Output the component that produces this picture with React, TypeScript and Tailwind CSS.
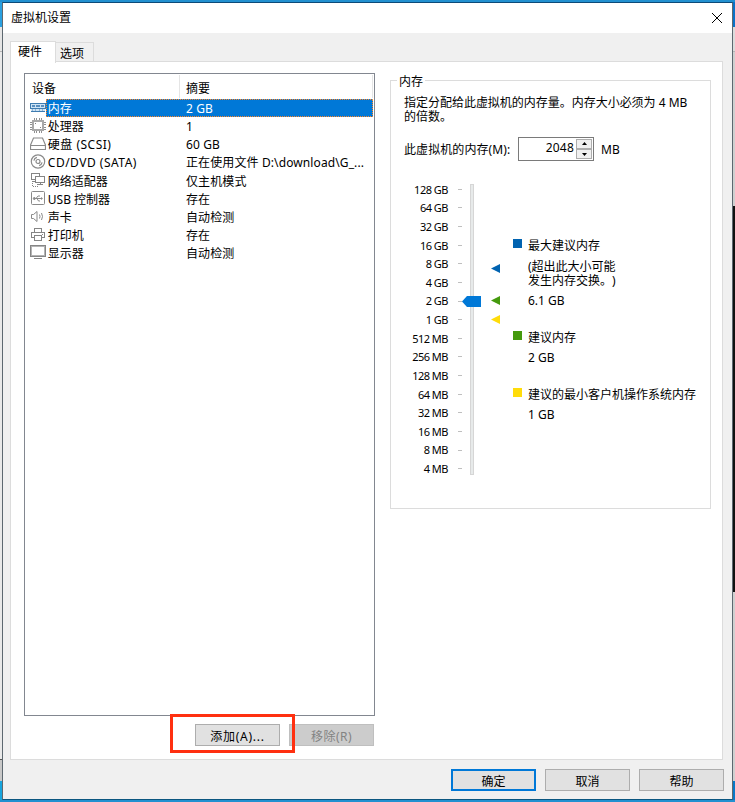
import React from 'react';
import clsx from 'clsx';

interface Device {
  name: string;
  summary: string;
  icon: React.ReactNode;
}

const MemoryIcon = () => (
  <svg width="16" height="18" viewBox="0 0 16 18" fill="none" shapeRendering="crispEdges">
    <path d="M0 4h16v6h-1v3H1v-3H0z" fill="#cfe4f5" />
    <path d="M0 4h16v1H0zM0 4h1v6H0zM15 4h1v6h-1zM0 9h16v1H0zM1 12h14v1H1z" fill="#3f7cb0" />
    <path d="M2 6h3v2H2zM6 6h4v2H6zM11 6h3v2h-3z" fill="#5a90c0" />
    <path d="M2 10h1v2H2zM5 10h1v2H5zM9 10h1v2H9zM12 10h1v2h-1z" fill="#8fb5d6" />
  </svg>
);

const CpuIcon = () => (
  <svg width="16" height="18" viewBox="0 0 16 18" fill="none" shapeRendering="crispEdges">
    <path d="M4 1h1v2H4zM6 1h1v2H6zM9 1h1v2H9zM11 1h1v2h-1zM4 14h1v2H4zM6 14h1v2H6zM9 14h1v2H9zM11 14h1v2h-1zM0 5h2v1H0zM0 7h2v1H0zM0 10h2v1H0zM0 12h2v1H0zM14 5h2v1h-2zM14 7h2v1h-2zM14 10h2v1h-2zM14 12h2v1h-2z" fill="#909090" />
    <rect x="3" y="4" width="10" height="9" stroke="#a8a8a8" strokeWidth="2" />
    <path d="M5 6h1v1H5zM10 10h1v1h-1z" fill="#808080" />
  </svg>
);

const DiskIcon = () => (
  <svg width="16" height="18" viewBox="0 0 16 18" fill="none" stroke="#8a8a8a" strokeWidth="1.2">
    <path d="M3.500 3h9l3 7v4.500H.5V10zM.5 10.500h15" />
  </svg>
);

const DiscIcon = () => (
  <svg width="16" height="18" viewBox="0 0 16 18" fill="none" stroke="#8a8a8a" strokeWidth="1.2">
    <circle cx="8" cy="8.500" r="6.700" />
    <circle cx="8" cy="8.500" r="2" />
    <path d="M3.900 7.700a4.200 4.200 0 0 1 3-3.300M12.100 9.300a4.200 4.200 0 0 1-3 3.300" />
  </svg>
);

const NetworkIcon = () => (
  <svg width="16" height="18" viewBox="0 0 16 18" fill="none" stroke="#858585" shapeRendering="crispEdges">
    <path d="M5 7.500H1.500v-6h8V4M2 9.500h3" />
    <path d="M5.500 4.500h9v6h-9zM7 12.500h6M10.500 10.500v2" />
    <path d="M2.500 11v3.500h6" strokeDasharray="1 1" />
  </svg>
);

const UsbIcon = () => (
  <svg width="16" height="18" viewBox="0 0 16 18" fill="none" stroke="#8a8a8a">
    <rect x="1.500" y="1.500" width="13" height="13" rx="1" />
    <path d="M4 8.500h8M6 8.500 8 6h2M7 8.500 8.500 11H10" />
    <circle cx="4.300" cy="8.500" r="1" fill="#8a8a8a" />
    <path d="M11 7l2 1.500-2 1.500z" fill="#8a8a8a" stroke="none" />
  </svg>
);

const SoundIcon = () => (
  <svg width="16" height="18" viewBox="0 0 16 18" fill="none" stroke="#8a8a8a">
    <path d="M1.500 6.500h2l3.500-3v10l-3.500-3h-2z" />
    <path d="M9.500 6.500q1 2 0 4M11.500 5q2 3.500 0 7" />
  </svg>
);

const PrinterIcon = () => (
  <svg width="16" height="18" viewBox="0 0 16 18" fill="none" stroke="#858585" shapeRendering="crispEdges">
    <path d="M4.500 6V2.500h7V6M4.500 11.500h-3v-5h13v5h-3M4.500 9.500h7v5h-7zM12 8.500h1" />
  </svg>
);

const DisplayIcon = () => (
  <svg width="16" height="18" viewBox="0 0 16 18" fill="none" shapeRendering="crispEdges">
    <rect x="1" y="2" width="14" height="10" stroke="#b4b4b4" strokeWidth="2" />
    <path d="M0 1.500h16M.5 1v12M15.500 1v12M0 12.500h16M4 14.500h8" stroke="#858585" />
  </svg>
);

const devices: Device[] = [
  { name: '内存', summary: '2 GB', icon: <MemoryIcon /> },
  { name: '处理器', summary: '1', icon: <CpuIcon /> },
  { name: '硬盘 (SCSI)', summary: '60 GB', icon: <DiskIcon /> },
  { name: 'CD/DVD (SATA)', summary: '正在使用文件 D:\\download\\G_...', icon: <DiscIcon /> },
  { name: '网络适配器', summary: '仅主机模式', icon: <NetworkIcon /> },
  { name: 'USB 控制器', summary: '存在', icon: <UsbIcon /> },
  { name: '声卡', summary: '自动检测', icon: <SoundIcon /> },
  { name: '打印机', summary: '存在', icon: <PrinterIcon /> },
  { name: '显示器', summary: '自动检测', icon: <DisplayIcon /> },
];

const scale = [
  '128 GB', '64 GB', '32 GB', '16 GB', '8 GB', '4 GB', '2 GB', '1 GB',
  '512 MB', '256 MB', '128 MB', '64 MB', '32 MB', '16 MB', '8 MB', '4 MB',
];

const Button = ({ children, className }: { children: React.ReactNode; className?: string }) => (
  <button className={clsx('flex h-[22px] w-[85px] items-center justify-center border pt-[3px]', className ?? 'border-[#adadad] bg-[#e1e1e1]')}>
    {children}
  </button>
);

const DeviceList = () => (
  <div className="flex h-[643px] w-[351px] flex-col border border-[#828790] bg-white">
    <div className="flex h-[25px] items-center pt-1">
      <span className="w-[154px] pl-[7px]">设备</span>
      <span className="-mt-1 h-[23px] w-px bg-[#e5e5e5]" />
      <span className="flex-1 pl-[6px]">摘要</span>
      <span className="-mt-1 mr-px h-[23px] w-px bg-[#e5e5e5]" />
    </div>
    {devices.map((device, i) => (
      <div key={device.name} className="flex h-[18.13px] pl-[5px] pr-px">
        {device.icon}
        <div
          className={clsx(
            'flex flex-1 items-center border border-dotted pt-[2px]',
            i === 0 ? 'border-[#ff8728] bg-[#0078d7] text-white' : 'border-transparent'
          )}
        >
          <span className={clsx('w-[138px] whitespace-nowrap pl-[0.8px]', device.name.includes('(') && 'tracking-[0.5px]')}>
            {device.name}
          </span>
          <span className="whitespace-nowrap pl-px tracking-[0.11px]">{device.summary}</span>
        </div>
      </div>
    ))}
  </div>
);

const Marker = ({ className }: { className: string }) => (
  <svg width="9" height="9" viewBox="0 0 9 9" className={clsx('absolute left-[100px]', className)}>
    <path d="M0 4.500 9 0v9z" fill="currentColor" />
  </svg>
);

const MemorySlider = () => (
  <div className="relative flex h-[300px] w-[122px] pl-[11px] text-[11px] tracking-[-0.5px]">
    <div className="flex w-[46px] flex-col pt-[1.700px]">
      {scale.map((label) => (
        <span key={label} className="h-[18.63px] whitespace-nowrap text-right leading-[18.63px]">
          {label}
        </span>
      ))}
    </div>
    <div className="ml-[10px] flex w-[4px] flex-col pt-[1px]">
      {scale.map((label) => (
        <span key={label} className="flex h-[18.63px] items-center">
          <span className="h-px w-full bg-[#bfbfbf]" />
        </span>
      ))}
    </div>
    <div className="ml-[8px] mt-[5px] h-[291px] w-[4px] border border-[#d6d6d6] bg-[#e7eaea]" />
    <svg width="19" height="11" viewBox="0 0 19 11" className="absolute left-[71px] top-[117px]">
      <path d="M0 5.500 5 0h14v11H5z" fill="#0078d7" />
    </svg>
    <Marker className="top-[85px] text-[#0063b1]" />
    <Marker className="top-[117px] text-[#459a0e]" />
    <Marker className="top-[136px] text-[#ffdc0a]" />
  </div>
);

const Legend = () => (
  <div className="flex flex-col pt-[59px] leading-[14px]">
    <div className="flex gap-[6px]">
      <span className="mt-px size-[9px] bg-[#0063b1]" />
      <div>
        <p className="pt-px">最大建议内存</p>
        <p className="mt-[7px]">(超出此大小可能<br />发生内存交换<span className="inline-block w-3">。</span>)</p>
        <p className="mt-[6px]">6.1 GB</p>
      </div>
    </div>
    <div className="mt-[22px] flex gap-[6px]">
      <span className="mt-px size-[9px] bg-[#459a0e]" />
      <div>
        <p className="pt-px">建议内存</p>
        <p className="mt-[6px]">2 GB</p>
      </div>
    </div>
    <div className="mt-[22px] flex gap-[6px]">
      <span className="mt-px size-[9px] bg-[#ffdc0a]" />
      <div>
        <p className="whitespace-nowrap pt-px">建议的最小客户机操作系统内存</p>
        <p className="mt-[6px]">1 GB</p>
      </div>
    </div>
  </div>
);

const MemoryPanel = () => (
  <section className="ml-[15px] mt-[7px] h-[429px] w-[321px] border border-[#dcdcdc]">
    <h2 className="-mt-2 ml-[6px] h-4 w-[28px] bg-white pl-[2px] leading-[18px]">内存</h2>
    <p className="ml-[13px] mt-[7px] whitespace-nowrap leading-[14px] tracking-[-0.02px]">
      指定分配给此虚拟机的内存量。内存大小必须为 4 MB<br />的倍数。
    </p>
    <div className="ml-[13px] mt-[13px] flex h-6 items-center">
      <span className="w-[114px] pt-[2px] tracking-[0.08px]">此虚拟机的内存(M):</span>
      <div className="flex h-6 w-[76px] border border-[#7a7a7a] pr-px">
        <span className="flex-1 pr-[2px] text-right leading-[19px] tracking-[0.2px]">2048</span>
        <div className="flex w-4 flex-col py-px">
          {['M2 4h5L4.500 1z', 'M2 2h5L4.500 5z'].map((d) => (
            <button key={d} className="flex flex-1 items-center justify-center border border-[#adadad] bg-[#f0f0f0]">
              <svg width="9" height="6" viewBox="0 0 9 6"><path d={d} fill="#000" /></svg>
            </button>
          ))}
        </div>
      </div>
      <span className="ml-[7px] pt-[2px]">MB</span>
    </div>
    <div className="mt-[18px] flex">
      <MemorySlider />
      <Legend />
    </div>
  </section>
);

const App = () => (
  <div className="flex h-[802px] w-[735px] flex-col bg-[#2290d0] font-['Noto_Sans','Noto_Sans_CJK_SC',sans-serif] text-[12px] text-black">
    <div className="h-[2px]" />
    <div className="flex h-[798px]">
      <div className="flex w-[2px] flex-col">
        <span className="h-[25px] bg-[#2aa0e0]" />
        <span className="h-[24px] bg-[#e5e5e5]" />
        <span className="h-px bg-[#b5b5b5]" />
        <span className="flex-1 bg-[#e9e9e9]" />
        <span className="h-px bg-[#555]" />
        <span className="h-[21px] bg-[#c8c8c8]" />
        <span className="h-[19px] bg-[#17a5de]" />
      </div>
      <div className="flex w-[731px] flex-col border border-x-[#5d6870] border-b-[#0b5680] border-t-[#0c4a78] bg-[#f0f0f0]">
        <header className="flex h-[30px] items-center justify-between bg-white pl-2 pr-[9px]">
          <h1 className="text-[12px]">虚拟机设置</h1>
          <svg width="12" height="12" viewBox="0 0 12 12" fill="none" stroke="#000">
            <path d="M1 1l10 10M11 1 1 11" />
          </svg>
        </header>
        <nav className="flex h-[29px] items-end pl-[7px] pt-[7px]">
          <div className="relative z-10 -mb-px h-[22px] w-[46px] border border-b-0 border-[#dcdcdc] bg-white pl-[7px] leading-[20px]">硬件</div>
          <div className="h-[20px] w-[38px] border border-b-0 border-l-0 border-[#dcdcdc] pl-[4px] leading-[21px]">选项</div>
        </nav>
        <main className="ml-[7px] -mt-px flex h-[699px] w-[713px] border border-[#dcdcdc] bg-white pl-[13px] pt-[11px]">
          <div>
            <DeviceList />
            <div className="mt-[8px] flex items-center pl-[171px]">
              <div className="relative">
                <Button className="border-[#adadad] bg-[#e1e1e1] tracking-[0.75px]">添加(A)...</Button>
                <div className="absolute -left-[25px] -top-[10px] h-[39px] w-[125px] border-[3px] border-[#ff3010]" />
              </div>
              <Button className="ml-[9px] border-[#bfbfbf] bg-[#cccccc] tracking-[0.45px] text-[#838383]">移除(R)</Button>
            </div>
          </div>
          <MemoryPanel />
        </main>
        <footer className="flex gap-[9px] pl-[448px] pt-[9px]">
          <Button className="border-2 border-[#0078d7] bg-[#e1e1e1]">确定</Button>
          <Button>取消</Button>
          <Button>帮助</Button>
        </footer>
      </div>
      <div className="flex w-[2px] flex-col">
        <span className="h-[25px] bg-[#0b72c8]" />
        <span className="h-[24px] bg-[#dcdcdc]" />
        <span className="h-px bg-[#b5b5b5]" />
        <span className="h-[154px] bg-[#d0d0d0]" />
        <span className="h-[386px] bg-[#111]" />
        <span className="flex-1 bg-[#d0d0d0]" />
        <span className="h-[19px] bg-[#0878c8]" />
      </div>
    </div>
  </div>
);

export default App;
